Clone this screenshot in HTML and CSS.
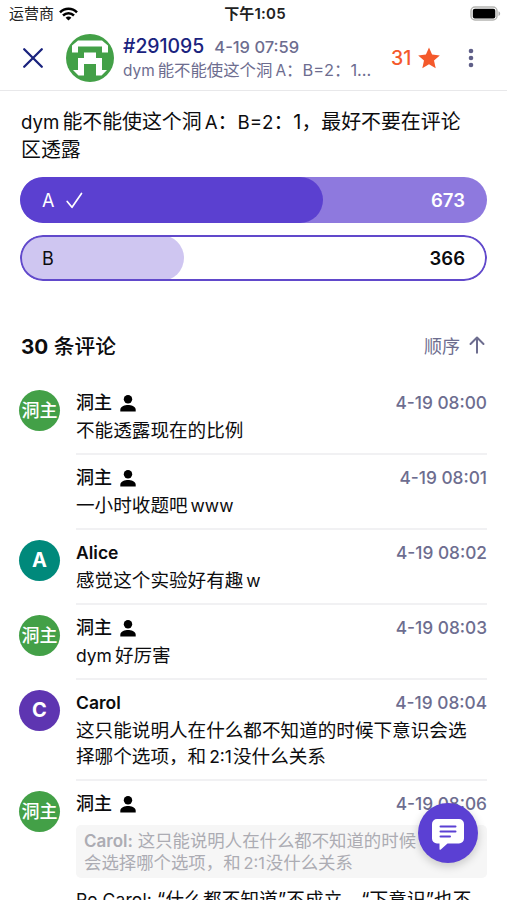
FILE: index.html
```html
<!DOCTYPE html>
<html lang="zh-CN">
<head>
  <meta charset="utf-8">
  <meta name="viewport" content="width=device-width, initial-scale=1">
  <title>#291095</title>
  <link rel="stylesheet" href="styles.css">
</head>
<body>
  <svg class="symbols" width="0" height="0">
    <symbol id="person" viewBox="0 0 16 17">
      <circle cx="8" cy="4.3" r="4.2"/>
      <path d="M0.3 16.5v-1.8C.3 11.4 5.2 10 8 10s7.700 1.400 7.700 4.700v1.800z"/>
    </symbol>
  </svg>

  <!-- Status bar -->
  <div class="status-bar">
    <div class="carrier">
      <span>运营商</span>
      <svg width="19" height="14" viewBox="0 0 19 14" fill="none" stroke="#000" stroke-width="2.500">
        <path d="M1 5.300C5.800.500 13.200.500 18 5.300"/>
        <path d="M4 8.500c3.200-3 7.800-3 11 0"/>
        <path d="M9.500 13.500 6.600 10.700c1.600-1.500 4.200-1.500 5.800 0z" fill="#000" stroke="none"/>
      </svg>
    </div>
    <div class="clock">下午1:05</div>
    <div class="battery">
      <svg width="31" height="15" viewBox="0 0 31 15">
        <rect x="1" y="1" width="26" height="13" rx="4" fill="#fff" stroke="#b5b5b2" stroke-width="1.500"/>
        <rect x="2.800" y="2.800" width="22.500" height="9.600" rx="2" fill="#000"/>
        <path d="M28.500 5.200c2.200.9 2.200 3.900 0 4.800z" fill="#aaa"/>
      </svg>
    </div>
  </div>

  <!-- Post header -->
  <header class="header">
    <svg class="close" width="22" height="22" viewBox="0 0 22 22" fill="none" stroke="#1a237e" stroke-width="2.300" stroke-linecap="round">
      <path d="M2.200 2.200 19.800 19.800M19.800 2.200 2.200 19.800"/>
    </svg>
    <svg class="hole-avatar" width="48" height="48" viewBox="0 0 48 48">
      <circle cx="24" cy="24" r="24" fill="#43a047"/>
      <path fill="#fff" d="M12 6.500h24l6 5v7h-6v-6h-24v6h-6v-7zM18 18.500h12v5.500h6v12h5l-5.500 5.500h-5.500v-11.500h-12v11.500h-5.500l-5.500-5.500h5v-12h6z"/>
    </svg>
    <div class="summary">
      <div class="summary-top">
        <span class="hole-id">#291095</span>
        <span class="hole-time">4-19 07:59</span>
      </div>
      <div class="summary-text"><span class="latin">dym</span>能不能使这个洞<span class="latin before">A</span>：B=2：1...</div>
    </div>
    <div class="stars">
      <span>31</span>
      <svg width="22" height="22" viewBox="0 0 22 22" fill="#f4592b">
        <path d="M11 .500 14.100 7.600 21.800 8.400 16 13.500 17.700 21.300 11 17.300 4.300 21.300 6 13.500 .200 8.400 7.900 7.600z"/>
      </svg>
    </div>
    <svg class="more" width="6" height="20" viewBox="0 0 6 20" fill="#5f5f88">
      <circle cx="3" cy="3" r="2.300"/><circle cx="3" cy="10" r="2.300"/><circle cx="3" cy="17" r="2.300"/>
    </svg>
  </header>

  <main class="content">
    <p class="post-text"><span class="latin">dym</span>能不能使这个洞<span class="latin before">A</span>：<span class="latin tight">B=2</span>：1，最好不要在评论区透露</p>

    <!-- Vote options -->
    <div class="option voted">
      <div class="option-fill" style="width: 64.8%"></div>
      <span class="option-name">A</span>
      <svg class="check" width="17" height="17" viewBox="0 0 17 17" fill="none" stroke="#fff" stroke-width="1.700" stroke-linecap="round" stroke-linejoin="round">
        <path d="M1.200 9.500 6 15.300 15.500 1.500"/>
      </svg>
      <span class="option-count">673</span>
    </div>
    <div class="option">
      <div class="option-fill" style="width: 35.2%"></div>
      <span class="option-name">B</span>
      <span class="option-count">366</span>
    </div>

    <div class="comments-head">
      <h2><b>30</b> 条评论</h2>
      <div class="sort">
        <span>顺序</span>
        <svg width="16" height="18" viewBox="0 0 16 18" fill="none" stroke="#6d6d8f" stroke-width="2" stroke-linecap="round" stroke-linejoin="round">
          <path d="M8 16.800V1.500M1.500 8 8 1.500 14.500 8"/>
        </svg>
      </div>
    </div>

    <!-- Comments -->
    <div class="comment">
      <div class="avatar green">洞主</div>
      <div class="comment-body">
        <div class="comment-top">
          <span class="name owner">洞主</span>
          <svg class="person" width="16" height="17"><use href="#person"/></svg>
          <span class="time">4-19 08:00</span>
        </div>
        <p>不能透露现在的比例</p>
      </div>
    </div>
    <div class="comment">
      <div class="avatar"></div>
      <div class="comment-body">
        <div class="comment-top">
          <span class="name owner">洞主</span>
          <svg class="person" width="16" height="17"><use href="#person"/></svg>
          <span class="time">4-19 08:01</span>
        </div>
        <p>一小时收题吧<span class="latin before">www</span></p>
      </div>
    </div>
    <div class="comment">
      <div class="avatar teal">A</div>
      <div class="comment-body">
        <div class="comment-top">
          <span class="name">Alice</span>
          <span class="time">4-19 08:02</span>
        </div>
        <p>感觉这个实验好有趣<span class="latin before">w</span></p>
      </div>
    </div>
    <div class="comment">
      <div class="avatar green">洞主</div>
      <div class="comment-body">
        <div class="comment-top">
          <span class="name owner">洞主</span>
          <svg class="person" width="16" height="17"><use href="#person"/></svg>
          <span class="time">4-19 08:03</span>
        </div>
        <p><span class="latin">dym</span>好厉害</p>
      </div>
    </div>
    <div class="comment">
      <div class="avatar purple">C</div>
      <div class="comment-body">
        <div class="comment-top">
          <span class="name">Carol</span>
          <span class="time">4-19 08:04</span>
        </div>
        <p>这只能说明人在什么都不知道的时候下意识会选择哪个选项，和<span class="latin both">2:1</span>没什么关系</p>
      </div>
    </div>
    <div class="comment">
      <div class="avatar green">洞主</div>
      <div class="comment-body">
        <div class="comment-top">
          <span class="name owner">洞主</span>
          <svg class="person" width="16" height="17"><use href="#person"/></svg>
          <span class="time">4-19 08:06</span>
        </div>
        <div class="quote"><b>Carol:</b> 这只能说明人在什么都不知道的时候<br>会选择哪个选项，和<span class="latin both">2:1</span>没什么关系</div>
        <p class="reply"><span class="latin tight">Re Carol: </span>“什么都不知道”不成立，“下意识”也不</p>
      </div>
    </div>
  </main>

  <!-- Floating reply button -->
  <div class="fab">
    <svg width="32" height="31" viewBox="0 0 32 31">
      <path fill="#fff" d="M5 0h22a5 5 0 0 1 5 5v14.500a5 5 0 0 1-5 5H15.500L8.800 30.500c-.7.600-1.300.2-1.300-.6v-5.400H5a5 5 0 0 1-5-5V5a5 5 0 0 1 5-5z"/>
      <path fill="none" stroke="#5b40d3" stroke-width="2" stroke-linecap="round" d="M8.500 7.500h15M8.500 12.500h15M8.500 17.500h9.500"/>
    </svg>
  </div>
</body>
</html>
```

FILE: styles.css
```css
* {
  box-sizing: border-box;
}
body {
  margin: 0;
  height: 900px;
  overflow: hidden;
  background: #fff;
  color: #0c0c0e;
  font-family: Inter, "Noto Sans CJK SC", sans-serif;
}
p, h2 {
  margin: 0;
}
.symbols {
  position: absolute;
}
/* Small gap between latin and chinese text */
.latin {
  margin-right: 3px;
  font-size: 0.94em;
  line-height: 1;
}
.latin.before {
  margin-left: 3px;
  margin-right: 0;
}
.latin.both {
  margin-left: 3px;
  margin-right: 1px;
}
.latin.tight {
  margin-right: 0;
}

/* Status bar */
.status-bar {
  height: 27px;
  display: grid;
  grid-template-columns: 1fr auto 1fr;
  align-items: center;
  padding: 0 6px 0 9px;
  font-size: 15px;
  line-height: 20px;
  color: #222;
}
.carrier {
  display: flex;
  align-items: center;
  gap: 5px;
}
.clock {
  font-size: 15px;
  font-weight: 600;
  letter-spacing: 0.2px;
}
.battery {
  display: flex;
  justify-content: flex-end;
}

/* Header */
.header {
  height: 64px;
  display: flex;
  align-items: center;
  padding: 0 33px 1px 22px;
  border-bottom: 1px solid #e8e8ea;
}
.hole-avatar {
  margin-left: 22px;
}
.summary {
  width: 250px;
  margin-left: 9px;
  white-space: nowrap;
  color: #6d6d8f;
}
.summary-top {
  display: flex;
  align-items: baseline;
  gap: 10px;
  height: 24px;
  line-height: 24px;
}
.hole-id {
  color: #1a237e;
  font-size: 19.400px;
  font-weight: 500;
}
.hole-time {
  font-size: 16.500px;
  font-weight: 500;
}
.summary-text {
  font-size: 16.400px;
  font-weight: 400;
  line-height: 24px;
}
.stars {
  display: flex;
  align-items: center;
  gap: 7px;
  margin-left: 18px;
  color: #f4592b;
  font-size: 19.500px;
  font-weight: 500;
}
.more {
  margin-left: auto;
}

/* Post */
.content {
  padding: 18px 20px 0;
}
.post-text {
  font-size: 19.900px;
  line-height: 27.500px;
  margin-bottom: 13px;
  padding: 0 20px 0 1px;
}

/* Options */
.option {
  position: relative;
  display: flex;
  align-items: center;
  height: 46px;
  margin-bottom: 12px;
  padding: 0 22px;
  border-radius: 23px;
  overflow: hidden;
  font-size: 18px;
}
.option::after {
  content: "";
  position: absolute;
  inset: 0;
  border: 2px solid #6149cb;
  border-radius: 23px;
}
.option.voted {
  background: #8e79de;
  color: #fff;
}
.option.voted::after {
  border: none;
}
/* The bar lies behind the label */
.option-fill {
  position: absolute;
  left: 0;
  top: 0;
  height: 100%;
  border-radius: 23px;
  background: #cfc6f1;
}
.voted .option-fill {
  background: #5b40d0;
}
.option-name, .check, .option-count {
  position: relative;
}
.check {
  margin-left: 12px;
}
.option-count {
  margin-left: auto;
  font-size: 18.500px;
  font-weight: 600;
}

/* Comments */
.comments-head {
  display: flex;
  justify-content: space-between;
  align-items: center;
  height: 30px;
  margin-top: 49px;
  margin-bottom: 20px;
}
.comments-head h2 {
  padding-left: 1px;
  font-size: 20.700px;
  font-weight: 500;
}
.comments-head b {
  font-weight: 700;
}
.sort {
  display: flex;
  align-items: center;
  gap: 9px;
  padding-right: 2px;
  font-size: 18px;
  font-weight: 400;
  color: #6d6d8f;
}
.comment {
  display: flex;
  gap: 15px;
}
.avatar {
  flex: none;
  width: 41px;
  height: 41px;
  margin-top: 10px;
  margin-left: -1px;
  border-radius: 50%;
  color: #fff;
  font-size: 18px;
  font-weight: 700;
  line-height: 41px;
  text-align: center;
  white-space: nowrap;
}
.green {
  background: #43a047;
  font-weight: 500;
}
.teal {
  background: #00897b;
  font-size: 20px;
}
.purple {
  background: #5e35b1;
  font-size: 20px;
}
.comment-body {
  flex: 1;
  margin-left: 1px;
  min-height: 75px;
  padding: 9px 0 10px;
  border-bottom: 2px solid #f1f1f3;
}
.comment-top {
  display: flex;
  align-items: center;
  height: 28px;
  line-height: 28px;
}
.name {
  font-size: 17.500px;
  font-weight: 600;
}
.owner {
  font-size: 18px;
  font-weight: 500;
}
.person {
  margin-left: 8px;
  fill: #000;
}
.time {
  margin-left: auto;
  font-size: 17.300px;
  font-weight: 500;
  color: #6d6d8f;
}
.comment p {
  padding-right: 18px;
  font-size: 18.600px;
  line-height: 26px;
}
.quote {
  margin-top: 7px;
  padding: 5px 8px 4px;
  border-radius: 5px;
  background: #f6f6f6;
  color: #acacb3;
  font-size: 17.400px;
  line-height: 22px;
  white-space: nowrap;
}
.quote b {
  font-size: 17px;
  font-weight: 600;
}
.comment .reply {
  margin-top: 8px;
  padding-right: 0;
  white-space: nowrap;
  letter-spacing: 0.15px;
}

/* Floating button, stays over the list */
.fab {
  position: absolute;
  left: 418px;
  top: 803px;
  width: 60px;
  height: 60px;
  padding-top: 2px;
  border-radius: 50%;
  background: #5b40d3;
  box-shadow: 0 3px 10px rgba(0, 0, 0, 0.2);
  display: flex;
  align-items: center;
  justify-content: center;
}
```
